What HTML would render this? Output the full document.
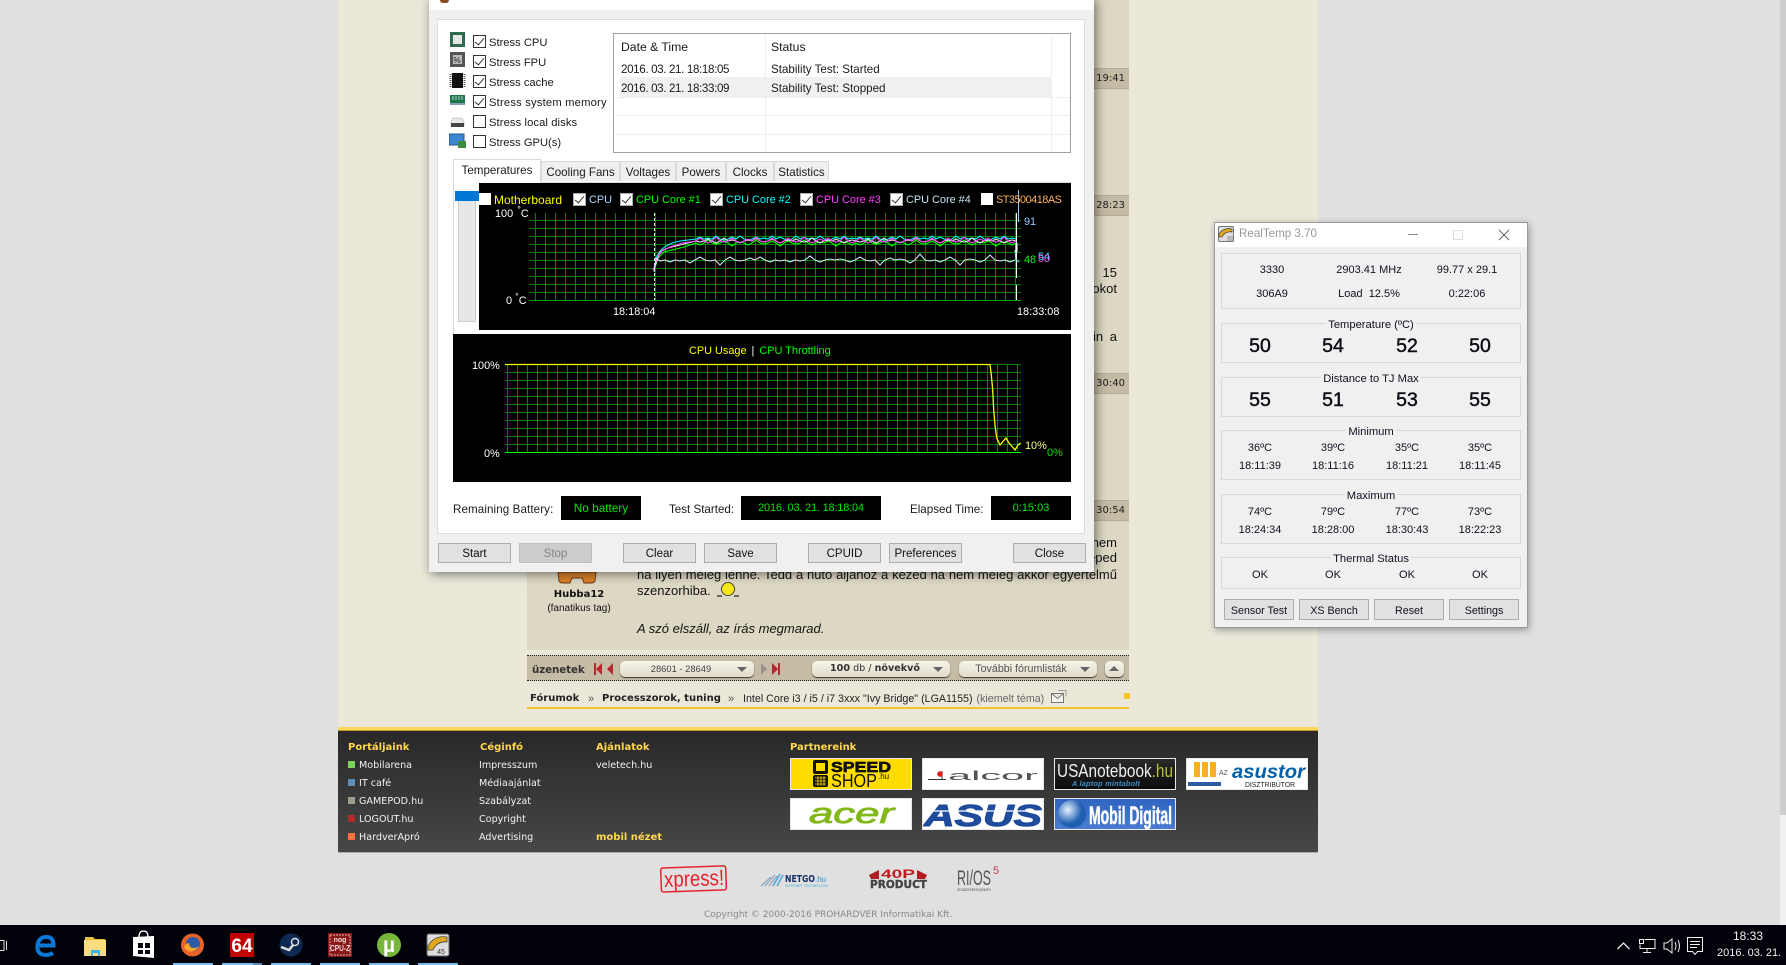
<!DOCTYPE html>
<html lang="hu"><head><meta charset="utf-8"><title>AIDA64 System Stability Test</title>
<style>
html,body{margin:0;padding:0}
body{width:1786px;height:965px;overflow:hidden;background:#e0e0e0;position:relative;font-family:"Liberation Sans",sans-serif;color:#111}
.a{position:absolute}
.t{position:absolute;white-space:nowrap;line-height:16px;height:16px}
.w{font-size:11.6px;color:#1a1a1a;margin-top:1px}
.s{font-size:11.2px;color:#1a1a1a;margin-top:1px}
.d{font-size:11.6px;letter-spacing:-.36px;color:#1a1a1a;margin-top:1px}
.v{font-family:"DejaVu Sans",sans-serif;font-size:9.6px;color:#f2f2f2;margin-top:1px}
.vb{font-family:"DejaVu Sans",sans-serif;font-size:10px;font-weight:bold;color:#ffd84f;margin-top:1px}
.sq{position:absolute;width:7px;height:7px;left:348px}
.time{position:absolute;left:1060px;width:69px;height:21px;background:#c5bca5;border-top:1px solid #b5ac95;border-bottom:1px solid #b5ac95;box-sizing:border-box}
.time span{position:absolute;right:4px;top:2px;font:10px/16px "DejaVu Sans",sans-serif;color:#222}
.p{font-size:13px;color:#111}
.dd{position:absolute;top:661px;height:16px;border-radius:5px;background:linear-gradient(#f7f4ea,#e0dbc9);box-shadow:0 1px 1px #333;text-align:center;line-height:16px;color:#555;font-size:10.7px}
.dd i{position:absolute;right:7px;top:6px;border-left:5px solid transparent;border-right:5px solid transparent;border-top:5px solid #666}
.cb{position:absolute;width:13px;height:13px;box-sizing:border-box;border:1px solid #333;background:#fff}
.cb.on::after{content:"";position:absolute;left:3px;top:0;width:4px;height:8px;border:solid #333;border-width:0 1.3px 1.3px 0;transform:rotate(40deg)}
.lg{font-size:10.9px}
.tab{position:absolute;top:161px;height:20px;box-sizing:border-box;background:#f0f0f0;border:1px solid #d9d9d9;border-bottom:0;text-align:center;line-height:22px;font-size:11.6px;color:#1a1a1a}
.btn{position:absolute;box-sizing:border-box;background:#e1e1e1;border:1px solid #adadad;text-align:center;font-size:11.5px;color:#111;height:20px;line-height:21px;width:73px;top:543px}
.blk{position:absolute;background:#000;color:#00e800;top:496px;height:24px;line-height:24px;text-align:center;font-size:11.2px}
.g{position:absolute;left:1221px;width:300px;box-sizing:border-box;border:1px solid #d9d9d9}
.ti{position:absolute;left:1221px;width:300px;text-align:center;height:14px;line-height:14px;font-size:11.2px;color:#101020;white-space:nowrap;margin-top:1px}
.ti span{background:#f0f0f0;padding:0 2px}
.c{position:absolute;width:80px;text-align:center;white-space:nowrap;font-size:11px;line-height:14px;height:14px;color:#101020;margin-top:1px}
.big{position:absolute;width:60px;text-align:center;font-size:19.5px;font-weight:normal;-webkit-text-stroke:.45px #0c0c14;line-height:22px;height:22px;color:#0c0c14;margin-top:1px}
.rb{position:absolute;top:599px;width:70px;height:21px;box-sizing:border-box;background:#e1e1e1;border:1px solid #adadad;text-align:center;font-size:10.7px;line-height:22px;color:#101020}
.logo{position:absolute;width:122px;height:32px;box-sizing:border-box;border:1px solid #e8e8e8;overflow:hidden}
.logo svg{position:absolute;left:-1px;top:-1px}
.ru{position:absolute;top:963px;height:2px;width:40px;background:#76b9ed}
</style></head><body>

<!-- page column -->
<div class="a" style="left:338px;top:0;width:980px;height:727px;background:#ebe8da"></div>
<div class="a" style="left:527px;top:0;width:602px;height:650px;background:#ddd8c3"></div>
<div class="time" style="top:68px"><span>19:41</span></div>
<div class="time" style="top:195px"><span>28:23</span></div>
<div class="time" style="top:373px"><span>30:40</span></div>
<div class="time" style="top:500px"><span>30:54</span></div>

<div class="t p" style="right:669px;top:265px">15</div>
<div class="t p" style="right:669px;top:281px">pokot</div>
<div class="t p" style="right:669px;top:329px;word-spacing:3px">in a</div>
<div class="t p" style="right:669px;top:535px">nem</div>
<div class="t p" style="right:669px;top:550px">téped</div>
<div class="a p" style="left:637px;top:567px;width:480px;line-height:16px;text-align:justify;text-align-last:justify;white-space:nowrap">na ilyen meleg lenne. Tedd a hűtő aljához a kezed ha nem meleg akkor egyértelmű</div>
<div class="t p" style="left:637px;top:583px">szenzorhiba.</div>
<svg class="a" style="left:714px;top:580px" width="32" height="20"><circle cx="14" cy="9" r="6.5" fill="#f6e61a" stroke="#222" stroke-width=".8"/><path d="M3 16h5M20 16h5" stroke="#222" stroke-width="1.2"/></svg>
<div class="t p" style="left:637px;top:621px;font-style:italic">A szó elszáll, az írás megmarad.</div>

<svg class="a" style="left:555px;top:570px" width="44" height="14"><path d="M3 2h38l-1 9q-1 2-4 2h-7l-2-5h-10l-2 5h-7q-3 0-4-2z" fill="#d9802a" stroke="#6a3b12"/></svg>
<div class="t" style="left:529px;width:100px;text-align:center;top:587px;font:bold 10px/16px 'DejaVu Sans',sans-serif">Hubba12</div>
<div class="t" style="left:529px;width:100px;text-align:center;top:601px;font-size:10px">(fanatikus tag)</div>

<!-- toolbar -->
<div class="a" style="left:527px;top:655px;width:602px;height:26px;box-sizing:border-box;background:#c5bca5;border-top:1px dotted #222;border-bottom:1px dotted #222"></div>
<div class="t" style="left:532px;top:661px;font:bold 10.3px/16px 'DejaVu Sans',sans-serif;color:#333;letter-spacing:-.1px;margin-top:1px">üzenetek</div>
<svg class="a" style="left:592px;top:661px" width="26" height="16"><path d="M2 2h2v12H2zM10 2v12L4 8zM21 2v12l-6-6z" fill="#b5282d"/></svg>
<div class="dd" style="left:620px;width:134px;font-size:9.4px;padding-right:12px;box-sizing:border-box;color:#444">28601 - 28649<i></i></div>
<svg class="a" style="left:758px;top:661px" width="26" height="16"><path d="M3 2v12l6-6z" fill="#a08f8a"/><path d="M14 2v12l6-6zM20 2h2v12h-2z" fill="#b5282d"/></svg>
<div class="dd" style="left:812px;width:138px;padding-right:12px;box-sizing:border-box;font-family:'DejaVu Sans',sans-serif;font-size:9.6px;color:#333"><b>100</b> db / <b>növekvő</b><i></i></div>
<div class="dd" style="left:959px;width:138px;padding-right:14px;box-sizing:border-box;color:#555">További fórumlisták<i></i></div>
<div class="dd" style="left:1105px;width:19px"><i style="right:5px;top:5px;border-top:0;border-bottom:5px solid #666"></i></div>

<!-- breadcrumb -->
<div class="t" style="left:530px;top:691px;font:bold 10px/16px 'DejaVu Sans',sans-serif;color:#222">Fórumok</div>
<div class="t" style="left:588px;top:691px;font-size:11px;color:#555">»</div>
<div class="t" style="left:602px;top:691px;font:bold 10px/16px 'DejaVu Sans',sans-serif;color:#222">Processzorok, tuning</div>
<div class="t" style="left:728px;top:691px;font-size:11px;color:#555">»</div>
<div class="t" style="left:743px;top:691px;font-size:10.7px;color:#222">Intel Core i3 / i5 / i7 3xxx "Ivy Bridge" (LGA1155) <span style="color:#666;margin-left:1px">(kiemelt téma)</span></div>
<svg class="a" style="left:1051px;top:690px" width="16" height="14"><path d="M.5 3.5h12v9H.5zM.5 3.5l6 5 6-5" fill="#f5f5f0" stroke="#777"/><path d="M7 .5h8v6" fill="none" stroke="#999"/></svg>
<div class="a" style="left:1124px;top:693px;width:6px;height:6px;background:#f5c32c"></div>
<div class="a" style="left:527px;top:707px;width:602px;height:2px;background:#f5c32c"></div>

<!-- footer -->
<div class="a" style="left:338px;top:727px;width:980px;height:4px;background:#fdd65a;border-bottom:1px solid #c49a20;box-sizing:border-box"></div>
<div class="a" style="left:338px;top:731px;width:980px;height:122px;background:linear-gradient(#282828,#474747);border-bottom:1px solid #aaa;box-sizing:border-box"></div>
<div class="t vb" style="left:348px;top:739px">Portáljaink</div>
<div class="t vb" style="left:480px;top:739px">Céginfó</div>
<div class="t vb" style="left:596px;top:739px">Ajánlatok</div>
<div class="t vb" style="left:790px;top:739px">Partnereink</div>
<div class="sq" style="top:761px;background:#7ed35e"></div><div class="t v" style="left:359px;top:757px">Mobilarena</div>
<div class="sq" style="top:779px;background:#5f8fb8"></div><div class="t v" style="left:359px;top:775px">IT café</div>
<div class="sq" style="top:797px;background:#a09c90"></div><div class="t v" style="left:359px;top:793px">GAMEPOD.hu</div>
<div class="sq" style="top:815px;background:#b02a2a"></div><div class="t v" style="left:359px;top:811px">LOGOUT.hu</div>
<div class="sq" style="top:833px;background:#ff7040"></div><div class="t v" style="left:359px;top:829px">HardverApró</div>
<div class="t v" style="left:479px;top:757px">Impresszum</div>
<div class="t v" style="left:479px;top:775px">Médiaajánlat</div>
<div class="t v" style="left:479px;top:793px">Szabályzat</div>
<div class="t v" style="left:479px;top:811px">Copyright</div>
<div class="t v" style="left:479px;top:829px">Advertising</div>
<div class="t v" style="left:596px;top:757px">veletech.hu</div>
<div class="t vb" style="left:596px;top:829px">mobil nézet</div>

<!-- partner logos -->
<div class="logo" style="left:790px;top:758px;background:#ffdc00"><svg width="122" height="32"><rect x="23" y="2" width="15" height="14" rx="2" fill="#111"/><rect x="26" y="5" width="9" height="8" fill="#ffdc00"/><rect x="23" y="17" width="15" height="12" rx="2" fill="#111"/><path d="M25 20h11M25 23h11M25 26h11M28 18v10M31 18v10M34 18v10" stroke="#ffdc00" stroke-width=".8"/><text x="41" y="14" font-family="Liberation Sans" font-weight="bold" font-size="15" textLength="60" lengthAdjust="spacingAndGlyphs" fill="#111" stroke="#111" stroke-width=".7">SPEED</text><text x="41" y="29" font-family="Liberation Sans" font-size="18" textLength="46" lengthAdjust="spacingAndGlyphs" fill="#111">SHOP</text><text x="88" y="21" font-family="Liberation Sans" font-size="8" fill="#111">.hu</text></svg></div>
<div class="logo" style="left:922px;top:758px;background:#fff"><svg width="122" height="32"><path d="M6 21.500h18M20 13v9" stroke="#333"/><circle cx="18" cy="16" r="2.800" fill="#e02020"/><text x="26" y="22" font-family="Liberation Sans" font-size="13" textLength="90" lengthAdjust="spacingAndGlyphs" fill="#555">alcor</text></svg></div>
<div class="logo" style="left:1054px;top:758px;background:linear-gradient(#2a2a2a,#0c0c0c)"><svg width="122" height="32"><text x="3" y="19" font-family="Liberation Sans" font-size="18" textLength="116" lengthAdjust="spacingAndGlyphs" fill="#eee">USAnotebook<tspan fill="#b8c040">.hu</tspan></text><text x="18" y="28" font-family="Liberation Sans" font-size="7.500" font-weight="bold" font-style="italic" textLength="68" fill="#3d8fc6">A laptop mintabolt</text></svg></div>
<div class="logo" style="left:1186px;top:758px;background:#fff"><svg width="122" height="32"><rect x="8" y="4" width="6" height="15" fill="#fbb21a"/><rect x="16" y="4" width="6" height="15" fill="#fbb21a"/><rect x="24" y="4" width="6" height="15" fill="#fbb21a"/><text x="33" y="17" font-family="Liberation Sans" font-size="7" fill="#555">AZ</text><text x="46" y="20" font-family="Liberation Sans" font-weight="bold" font-style="italic" font-size="19" textLength="73" lengthAdjust="spacingAndGlyphs" fill="#0060a8">asustor</text><text x="59" y="29" font-family="Liberation Sans" font-size="7" textLength="50" lengthAdjust="spacingAndGlyphs" fill="#222">DISZTRIBÚTOR</text><rect x="2" y="24" width="33" height="4" fill="#2a5ea0"/></svg></div>
<div class="logo" style="left:790px;top:798px;background:#fff"><svg width="122" height="32"><text x="19" y="25" font-family="Liberation Sans" font-style="italic" font-size="29" textLength="85" lengthAdjust="spacingAndGlyphs" fill="#83b81a" stroke="#83b81a" stroke-width=".8">acer</text></svg></div>
<div class="logo" style="left:922px;top:798px;background:#fff"><svg width="122" height="32"><text x="2" y="28" font-family="Liberation Sans" font-weight="bold" font-style="italic" font-size="31" textLength="118" lengthAdjust="spacingAndGlyphs" fill="#1f4b9c" stroke="#1f4b9c" stroke-width="1">ASUS</text><path d="M0 13h122" stroke="#fff" stroke-width="1.200"/></svg></div>
<div class="logo" style="left:1054px;top:798px;background:linear-gradient(#2f64c0,#4a7bd0)"><svg width="122" height="32"><defs><radialGradient id="gl" cx=".35" cy=".35"><stop offset="0" stop-color="#e8f2ff"/><stop offset="1" stop-color="#1f5fb0"/></radialGradient></defs><circle cx="18" cy="16" r="14" fill="url(#gl)"/><text x="35" y="26" font-family="Liberation Sans" font-weight="bold" font-size="25" textLength="83" lengthAdjust="spacingAndGlyphs" fill="#fff" stroke="#fff" stroke-width=".5">Mobil Digital</text></svg></div>

<!-- bottom sponsors -->
<svg class="a" style="left:655px;top:860px" width="350" height="36">
<g transform="rotate(-2 38 18)"><rect x="6" y="7" width="65" height="24" rx="2" fill="none" stroke="#e8222c" stroke-width="1.500"/><text x="9" y="26" font-family="Liberation Sans" font-size="22" textLength="60" lengthAdjust="spacingAndGlyphs" fill="#e8222c">xpress!</text></g>
<path d="M106 26l10-9M110 26l10-11M114 26l8-10" stroke="#8aa2b8" stroke-width="1.200"/><path d="M118 26l7-12M122 26l6-11" stroke="#48a8d8" stroke-width="1.500"/>
<text x="130" y="22" font-family="DejaVu Sans" font-weight="bold" font-size="10" textLength="30" lengthAdjust="spacingAndGlyphs" fill="#15306a">NETGO</text><text x="160" y="22" font-family="Liberation Sans" font-size="8" fill="#2a8ac8">.hu</text><text x="130" y="27" font-family="Liberation Sans" font-size="3.500" textLength="44" fill="#3ba8dc">INTERNET TECHNOLOGY</text>
<path d="M214 15l10-5v9h-8zM272 15l-10-5v9h8z" fill="#b01c20"/>
<text x="226" y="18" font-family="Liberation Sans" font-weight="bold" font-size="12" textLength="34" lengthAdjust="spacingAndGlyphs" fill="#c01c20">40P</text>
<text x="215" y="28" font-family="DejaVu Sans" font-weight="bold" font-size="11" textLength="57" lengthAdjust="spacingAndGlyphs" fill="#444" stroke="#444" stroke-width=".4">PRODUCT</text>
<text x="302" y="25" font-family="Liberation Sans" font-size="21" textLength="34" lengthAdjust="spacingAndGlyphs" fill="#555">RI/OS</text><text x="338" y="14" font-family="Liberation Sans" font-size="11" fill="#c04050">5</text><text x="302" y="31" font-family="Liberation Sans" font-size="3.500" textLength="34" fill="#555">STUDIO FOROS LENGTH</text>
</svg>
<div class="t" style="left:704px;top:907px;font:9px/16px 'DejaVu Sans',sans-serif;color:#888">Copyright © 2000-2016 PROHARDVER Informatikai Kft.</div>

<!-- scrollbar -->
<div class="a" style="left:1780px;top:0;width:6px;height:815px;background:#cdcdcd"></div>
<div class="a" style="left:1780px;top:815px;width:6px;height:110px;background:#f0f0f0"></div>

<!-- AIDA window -->
<div class="a" style="left:429px;top:-2px;width:665px;height:574px;background:#f0f0f0;box-shadow:2px 2px 10px rgba(0,0,0,.5)"></div>
<div class="a" style="left:429px;top:0;width:665px;height:10px;background:#fff"></div>
<div class="a" style="left:440px;top:0;width:9px;height:3px;background:#8a4a20;border-radius:0 0 4px 4px"></div>
<div class="a" style="left:437px;top:19px;width:648px;height:515px;box-sizing:border-box;background:#fff;border:1px solid #dcdcdc"></div>

<!-- stress icons -->
<svg class="a" style="left:449px;top:31px" width="18" height="120">
<rect x="1" y="1" width="15" height="15" fill="#2f6b4f"/><rect x="4" y="4" width="9" height="9" fill="#e6e6e6"/>
<rect x="1" y="21" width="15" height="15" fill="#555"/><rect x="4" y="24" width="9" height="9" fill="#bbb"/><text x="4.500" y="32" font-size="8" font-family="Liberation Sans" fill="#222">%</text>
<rect x="3" y="42" width="11" height="15" fill="#111"/><path d="M1.500 43v13M15.500 43v13" stroke="#555" stroke-width="2" stroke-dasharray="1 1"/>
<rect x="1" y="64" width="15" height="8" fill="#1c7a48"/><path d="M3 66h11M3 68h11" stroke="#bcd" stroke-dasharray="2 1"/><rect x="1" y="72" width="15" height="2" fill="#89b"/>
<path d="M2 90l2-3h9l2 3v5H2z" fill="#e8e8e8" stroke="#aaa" stroke-width=".5"/><rect x="2" y="92" width="13" height="4" fill="#444"/>
<rect x="0" y="103" width="15" height="11" fill="#3a88d0" stroke="#27568a"/><rect x="9" y="110" width="8" height="7" fill="#3c8a3c"/>
</svg>
<div class="cb on" style="left:473px;top:35px"></div><div class="t s" style="left:489px;top:34px">Stress CPU</div>
<div class="cb on" style="left:473px;top:55px"></div><div class="t s" style="left:489px;top:54px">Stress FPU</div>
<div class="cb on" style="left:473px;top:75px"></div><div class="t s" style="left:489px;top:74px">Stress cache</div>
<div class="cb on" style="left:473px;top:95px"></div><div class="t s" style="left:489px;top:94px;letter-spacing:.2px">Stress system memory</div>
<div class="cb" style="left:473px;top:115px"></div><div class="t s" style="left:489px;top:114px;letter-spacing:.1px">Stress local disks</div>
<div class="cb" style="left:473px;top:135px"></div><div class="t s" style="left:489px;top:134px">Stress GPU(s)</div>

<!-- log table -->
<div class="a" style="left:613px;top:33px;width:458px;height:120px;box-sizing:border-box;background:#fff;border:1px solid #a0a0a0"></div>
<div class="a" style="left:620px;top:77px;width:431px;height:20px;background:#f0f0f0"></div>
<div class="a" style="left:615px;top:97px;width:455px;height:1px;background:#eee"></div>
<div class="a" style="left:615px;top:115px;width:455px;height:1px;background:#eee"></div>
<div class="a" style="left:615px;top:134px;width:455px;height:1px;background:#eee"></div>
<div class="a" style="left:765px;top:35px;width:1px;height:116px;background:#eee"></div>
<div class="a" style="left:1051px;top:35px;width:1px;height:116px;background:#eee"></div>
<div class="t" style="left:621px;top:39px;font-size:12.2px;color:#1a1a1a">Date &amp; Time</div><div class="t" style="left:771px;top:39px;font-size:12.2px;color:#1a1a1a">Status</div>
<div class="t d" style="left:621px;top:61px">2016. 03. 21. 18:18:05</div><div class="t w" style="left:771px;top:61px">Stability Test: Started</div>
<div class="t d" style="left:621px;top:80px">2016. 03. 21. 18:33:09</div><div class="t w" style="left:771px;top:80px">Stability Test: Stopped</div>

<!-- tabs -->
<div class="a" style="left:453px;top:182px;width:618px;height:1px;background:#d9d9d9"></div>
<div class="a" style="left:453px;top:182px;width:1px;height:152px;background:#d9d9d9"></div>
<div class="tab" style="left:453px;top:159px;height:24px;width:88px;background:#fff;line-height:21px">Temperatures</div>
<div class="tab" style="left:541px;width:79px">Cooling Fans</div>
<div class="tab" style="left:620px;width:56px">Voltages</div>
<div class="tab" style="left:676px;width:50px">Powers</div>
<div class="tab" style="left:726px;width:48px">Clocks</div>
<div class="tab" style="left:774px;width:55px">Statistics</div>

<!-- temperature graph -->
<div class="a" style="left:458px;top:192px;width:18px;height:130px;box-sizing:border-box;background:#e6e8e8;border:1px solid #ccc"></div>
<div class="a" style="left:455px;top:191px;width:24px;height:10px;background:#0078d7"></div>
<div class="a" style="left:479px;top:183px;width:592px;height:147px;background:#000"></div>
<div class="a" style="left:453px;top:334px;width:618px;height:148px;background:#000"></div>

<svg class="a" style="left:0;top:0" width="1786" height="965">
<defs>
<pattern id="tv" patternUnits="userSpaceOnUse" x="535" y="0" width="10" height="10"><rect width="1" height="10" fill="#008400"/></pattern>
<pattern id="th" patternUnits="userSpaceOnUse" x="0" y="220" width="10" height="8"><rect width="10" height="1" fill="#008400"/></pattern>
<pattern id="cv" patternUnits="userSpaceOnUse" x="507" y="0" width="10" height="10"><rect width="1" height="10" fill="#008400"/></pattern>
<pattern id="ch" patternUnits="userSpaceOnUse" x="0" y="364" width="10" height="8"><rect width="10" height="1" fill="#008400"/></pattern>
<path id="sg" stroke="#00ff00" d="M696 243l4 2 4-2 4-3 4 3 4 1 4-1 4-2 4 2 4 3 4-3 4-1 4 1 4 2 4-2 4-3 4 3 4 1 4-1 4-2 4 2 4 3 4-3 4-2 4 2 4 1 4-1 4-3 4 3 4 2 4-2 4-1 4 1 4-2 4 2 4 3 4-3 4-1 4 1 4 2 4-2"/>
<path id="sc" stroke="#00ffff" d="M696 239l4-2 4 2 4-1 4 1 4-3 4 3 4 1 4-1 4-2 4 2 4-3 4 3 4 1 4-1 4-2 4 2 4-1 4 1 4-3 4 3 4-2 4 2 4 1 4-1 4-3 4 3 4-2 4 2 4-1 4 1 4-3 4 3 4 1 4-1 4-2 4 2 4-3 4 3 4-1 4 1"/>
<path id="sw" stroke="#e8e8e8" d="M696 241l4 1 4-1 4-2 4 2 4 2 4-2 4-3 4 3 4-1 4 1 4 2 4-2 4-1 4 1 4-3 4 3 4 1 4-1 4-2 4 2 4 2 4-2 4-1 4 1 4-2 4 2 4 1 4-1 4-3 4 3 4 2 4-2 4-1 4 1 4-2 4 2 4 2 4-2 4-1 4 1"/>
<path id="sm" stroke="#ff40ff" d="M696 241l4-3 4 3 4 2 4-2 4-4 4 4 4 1 4-1 4-3 4 3 4 2 4-2 4-2 4 2 4-4 4 4 4 1 4-1 4-3 4 3 4 2 4-2 4-3 4 3 4 1 4-1 4-4 4 4 4 2 4-2 4-2 4 2 4-3 4 3 4 1 4-1 4-4 4 4 4 2 4-2"/>
</defs>
<rect x="529" y="213" width="492" height="88" fill="url(#tv)"/>
<rect x="529" y="220" width="492" height="81" fill="url(#th)"/>
<rect x="529" y="300" width="492" height="1" fill="#00a000"/>
<path d="M654.500 213V300" stroke="#fff" stroke-dasharray="3 2"/>
<path d="M1016.500 213V278M1016.500 285V300" stroke="#fff"/>
<path d="M1016.500 243V252" stroke="#fff" stroke-width="2"/>
<path d="M1018.500 190V222" stroke="#a0c8ff"/><path d="M1015 250l1 10 3 2" stroke="#a0f0ff" fill="none"/>
<g fill="none" stroke-width="1.100">
<path stroke="#00ff00" d="M655 268L658 258 664 252 672 250 684 247 696 243"/>
<use href="#sg"/><use href="#sg" x="160"/>
<path stroke="#00ffff" d="M655 266L657 256 661 250 666 246 672 243 680 241 696 239"/>
<use href="#sc"/><use href="#sc" x="160"/>
<path stroke="#e8e8e8" d="M655 266L660 252 668 248 680 245 696 241"/>
<use href="#sw"/><use href="#sw" x="160"/>
<path stroke="#ff40ff" d="M653 270L658 256 663 250 670 247 682 243 696 241"/>
<use href="#sm"/><use href="#sm" x="160"/>
<path stroke="#cfe4ff" d="M654 272L656 258 660 261l5-1 5 2 5-2 5 1 5-1 5 3 5-3 5-3 5 3 5 1 5-1 5 5 5-5 5-3 5 3 5 1 5-1 5-2 5 2 5-3 5 3 5 2 5-2 5 1 5-1 5 2 5-2 5 1 5-1 5-4 5 4 5 2 5-2 5-1 5 1 5-1 5 1 5 2 5-2 5-3 5 3 5 1 5-1 5 5 5-5 5-2 5 2 5-1 5 1 5 3 5-3 5-6 5 6 5 1 5-1 5 2 5-2 5-3 5 3 5 5 5-5 5-1 5 1 5 2 5-2 5-5 5 5 5 1 5-1 5 2 5-2"/>
</g>
<rect x="505" y="364" width="516" height="88" fill="url(#cv)"/>
<rect x="505" y="364" width="516" height="88" fill="url(#ch)"/>
<rect x="505" y="452" width="516" height="1" fill="#00ff00"/>
<path d="M505 364.500H990L991.300 375 992.700 390 993.700 410 995 425 996.700 438 1000 445 1006 438 1009 443 1011.700 446 1015 450 1018 445 1020.700 443" fill="none" stroke="#ffff00" stroke-width="1.300"/>
</svg>

<!-- temp graph text -->
<div class="a" style="left:479px;top:193px;width:12px;height:12px;background:#fff"></div>
<div class="t lg" style="left:494px;top:192px;color:#ffff00;font-size:12px">Motherboard</div>
<div class="cb on" style="left:573px;top:193px;border-color:#aaa"></div><div class="t lg" style="left:589px;top:192px;color:#b0d8ff">CPU</div>
<div class="cb on" style="left:620px;top:193px;border-color:#aaa"></div><div class="t lg" style="left:636px;top:192px;color:#00ff00">CPU Core #1</div>
<div class="cb on" style="left:710px;top:193px;border-color:#aaa"></div><div class="t lg" style="left:726px;top:192px;color:#00ffff">CPU Core #2</div>
<div class="cb on" style="left:800px;top:193px;border-color:#aaa"></div><div class="t lg" style="left:816px;top:192px;color:#ff40ff">CPU Core #3</div>
<div class="cb on" style="left:890px;top:193px;border-color:#aaa"></div><div class="t lg" style="left:906px;top:192px;color:#c8e4f0">CPU Core #4</div>
<div class="a" style="left:981px;top:193px;width:12px;height:12px;background:#fff"></div>
<div class="t lg" style="left:996px;top:192px;color:#ffb060;letter-spacing:-.5px">ST3500418AS</div>
<div class="t lg" style="left:495px;top:206px;color:#fff;word-spacing:1px">100 <sup style="font-size:9px;line-height:0">°</sup>C</div>
<div class="t lg" style="left:506px;top:293px;color:#fff">0 <sup style="font-size:9px;line-height:0">°</sup>C</div>
<div class="t lg" style="left:613px;top:304px;color:#fff">18:18:04</div>
<div class="t lg" style="left:1017px;top:304px;color:#fff">18:33:08</div>
<div class="t lg" style="left:1024px;top:214px;color:#a0c8ff">91</div>
<div class="t lg" style="left:1024px;top:252px;color:#00ff00">48</div>
<div class="t lg" style="left:1038px;top:249px;color:#00e0ff">54</div>
<div class="t lg" style="left:1038px;top:251px;color:#ff60ff">50</div>

<!-- cpu graph text -->
<div class="t lg" style="left:689px;top:343px;color:#ffff00">CPU Usage <span style="color:#fff;padding:0 2px">|</span> <span style="color:#00ff00">CPU Throttling</span></div>
<div class="t lg" style="left:472px;top:358px;color:#fff">100%</div>
<div class="t lg" style="left:484px;top:446px;color:#fff">0%</div>
<div class="t lg" style="left:1025px;top:438px;color:#ffff80">10%</div>
<div class="t lg" style="left:1047px;top:445px;color:#00e000">0%</div>

<!-- status row -->
<div class="t w" style="left:453px;top:501px;letter-spacing:.1px">Remaining Battery:</div>
<div class="blk" style="left:561px;width:80px;font-size:11.8px">No battery</div>
<div class="t w" style="left:669px;top:501px">Test Started:</div>
<div class="blk" style="left:741px;width:140px;font-size:11px;letter-spacing:-.2px">2016. 03. 21. 18:18:04</div>
<div class="t w" style="left:910px;top:501px">Elapsed Time:</div>
<div class="blk" style="left:991px;width:80px;font-size:11px">0:15:03</div>

<div class="btn" style="left:438px">Start</div>
<div class="btn" style="left:519px;background:#ccc;border-color:#bfbfbf;color:#858585">Stop</div>
<div class="btn" style="left:623px">Clear</div>
<div class="btn" style="left:704px">Save</div>
<div class="btn" style="left:808px">CPUID</div>
<div class="btn" style="left:889px">Preferences</div>
<div class="btn" style="left:1013px">Close</div>

<!-- RealTemp window -->
<div class="a" style="left:1214px;top:222px;width:314px;height:406px;box-sizing:border-box;background:#f0f0f0;border:1px solid #9a9a9a;box-shadow:1px 2px 7px rgba(0,0,0,.35)"></div>
<div class="a" style="left:1215px;top:223px;width:312px;height:24px;background:#fff"></div>
<svg class="a" style="left:1218px;top:226px" width="17" height="16"><rect x=".5" y=".5" width="15" height="15" rx="1" fill="#ddd" stroke="#777"/><path d="M1 8q5-7 13-5v3q-7-1-10 5H1z" fill="#e0a820" stroke="#222" stroke-width=".6"/><rect x="9" y="10" width="6" height="5" fill="#bbb"/></svg>
<div class="t" style="left:1239px;top:226px;font-size:11.6px;color:#999">RealTemp 3.70</div>
<div class="a" style="left:1408px;top:234px;width:10px;height:1px;background:#888"></div>
<div class="a" style="left:1453px;top:230px;width:10px;height:10px;box-sizing:border-box;border:1px solid #ddd"></div>
<svg class="a" style="left:1498px;top:229px" width="12" height="12"><path d="M1 1l10 10M11 1L1 11" stroke="#666"/></svg>

<div class="g" style="top:253px;height:56px"></div>
<div class="g" style="top:323px;height:40px"></div>
<div class="g" style="top:377px;height:40px"></div>
<div class="g" style="top:430px;height:50px"></div>
<div class="g" style="top:494px;height:50px"></div>
<div class="g" style="top:557px;height:32px"></div>

<div class="c" style="left:1232px;top:262px">3330</div>
<div class="c" style="left:1329px;top:262px">2903.41 MHz</div>
<div class="c" style="left:1427px;top:262px">99.77 x 29.1</div>
<div class="c" style="left:1232px;top:286px">306A9</div>
<div class="c" style="left:1329px;top:286px">Load&nbsp; 12.5%</div>
<div class="c" style="left:1427px;top:286px">0:22:06</div>

<div class="ti" style="top:317px"><span>Temperature (ºC)</span></div>
<div class="big" style="left:1230px;top:334px">50</div><div class="big" style="left:1303px;top:334px">54</div><div class="big" style="left:1377px;top:334px">52</div><div class="big" style="left:1450px;top:334px">50</div>
<div class="ti" style="top:371px"><span>Distance to TJ Max</span></div>
<div class="big" style="left:1230px;top:388px">55</div><div class="big" style="left:1303px;top:388px">51</div><div class="big" style="left:1377px;top:388px">53</div><div class="big" style="left:1450px;top:388px">55</div>

<div class="ti" style="top:424px"><span>Minimum</span></div>
<div class="c" style="left:1220px;top:440px">36ºC</div><div class="c" style="left:1293px;top:440px">39ºC</div><div class="c" style="left:1367px;top:440px">35ºC</div><div class="c" style="left:1440px;top:440px">35ºC</div>
<div class="c" style="left:1220px;top:458px">18:11:39</div><div class="c" style="left:1293px;top:458px">18:11:16</div><div class="c" style="left:1367px;top:458px">18:11:21</div><div class="c" style="left:1440px;top:458px">18:11:45</div>

<div class="ti" style="top:488px"><span>Maximum</span></div>
<div class="c" style="left:1220px;top:504px">74ºC</div><div class="c" style="left:1293px;top:504px">79ºC</div><div class="c" style="left:1367px;top:504px">77ºC</div><div class="c" style="left:1440px;top:504px">73ºC</div>
<div class="c" style="left:1220px;top:522px">18:24:34</div><div class="c" style="left:1293px;top:522px">18:28:00</div><div class="c" style="left:1367px;top:522px">18:30:43</div><div class="c" style="left:1440px;top:522px">18:22:23</div>

<div class="ti" style="top:551px"><span>Thermal Status</span></div>
<div class="c" style="left:1220px;top:567px">OK</div><div class="c" style="left:1293px;top:567px">OK</div><div class="c" style="left:1367px;top:567px">OK</div><div class="c" style="left:1440px;top:567px">OK</div>

<div class="rb" style="left:1224px">Sensor Test</div>
<div class="rb" style="left:1299px">XS Bench</div>
<div class="rb" style="left:1374px">Reset</div>
<div class="rb" style="left:1449px">Settings</div>

<!-- taskbar -->
<div class="a" style="left:0;top:925px;width:1786px;height:40px;background:#02030a"></div>
<svg class="a" style="left:0;top:925px" width="470" height="40">
<path d="M0 15.500h4v10H0M6.500 16v9" fill="none" stroke="#ddd"/>
<!-- edge -->
<path d="M39.500 20.500h14q0-8.500-7-8.500-8 0-9 8.500-1 9 8 9.500 4 0 7.500-2" fill="none" stroke="#0a78d7" stroke-width="4"/>
<!-- folder -->
<path d="M85 12h8l2 2h10v5H85z" fill="#e8c040"/><rect x="84" y="15" width="22" height="16" fill="#fbdc7e"/><rect x="91" y="25" width="9" height="6" fill="#39b4e8"/><rect x="93" y="28" width="5" height="3" fill="#fbdc7e"/>
<!-- store -->
<path d="M133 12l21-1v22l-21-2z" fill="#fff"/><path d="M139 12q0-6 4.500-6t4.500 6" fill="none" stroke="#fff" stroke-width="1.300"/><path d="M138 18h5v5h-5zM145 18h5v5h-5zM138 25h5v4h-5zM145 25h5v4h-5z" fill="#02030a"/>
<!-- firefox -->
<circle cx="192.500" cy="20" r="11.500" fill="#e8622a"/><circle cx="193" cy="19" r="7" fill="#2a5aa8"/><path d="M184 22q4 6 9 4 5-1 6-6-1 3-5 3-5 0-5-5-3 0-5 4z" fill="#f6a526"/>
<!-- 64 -->
<rect x="230" y="8" width="24" height="24" fill="#c00000"/><text x="242" y="27" text-anchor="middle" font-family="Liberation Sans" font-weight="bold" font-size="19" fill="#fff">64</text>
<!-- steam -->
<circle cx="291" cy="20" r="11.500" fill="#0f2a52"/><circle cx="295" cy="17" r="3.500" fill="none" stroke="#ddd" stroke-width="1.500"/><path d="M281 22l8 3 4-5" stroke="#ddd" stroke-width="2.500" fill="none"/>
<!-- cpu-z -->
<rect x="328" y="8" width="24" height="24" fill="#8a1818"/><rect x="330" y="10" width="20" height="20" fill="none" stroke="#d9b0b0" stroke-dasharray="2 1"/><text x="340" y="17" text-anchor="middle" font-family="Liberation Sans" font-weight="bold" font-size="7" fill="#f3dddd">nog</text><text x="340" y="26" text-anchor="middle" font-family="Liberation Sans" font-weight="bold" font-size="8" textLength="20" lengthAdjust="spacingAndGlyphs" fill="#f3dddd">CPU-Z</text>
<!-- utorrent -->
<circle cx="389" cy="20" r="12" fill="#78b63c"/><text x="389" y="27" text-anchor="middle" font-family="Liberation Sans" font-weight="bold" font-size="21" fill="#fff">µ</text>
<!-- realtemp -->
<rect x="427" y="9" width="22" height="22" rx="2" fill="#ddd" stroke="#666"/><path d="M428 21q6-11 19-9v5q-10-1-14 8h-5z" fill="#e0a820" stroke="#333" stroke-width=".7"/><text x="441" y="29" text-anchor="middle" font-family="Liberation Sans" font-size="7" fill="#333">45</text>
</svg>
<div class="ru" style="left:173px"></div>
<div class="ru" style="left:222px"></div><div class="a" style="left:253px;top:963px;width:9px;height:2px;background:#5a8db8"></div>
<div class="ru" style="left:271px"></div>
<div class="ru" style="left:320px"></div>
<div class="ru" style="left:369px"></div>
<div class="ru" style="left:418px"></div>

<svg class="a" style="left:1610px;top:925px" width="100" height="40" fill="none" stroke="#eee">
<path d="M7.500 24l6-6 6 6" stroke-width="1.300"/>
<path d="M34.500 14.500h10.500v9h-15v-4M37 23.500v3.500M33 27.500h8M29.500 14.500h4v4h-4z"/>
<path d="M54 18h3l5-4v14l-5-4h-3zM65 17q2 4 0 8M68 15q3 6 0 12"/>
<path d="M77.500 12.500h15v14h-5l-2.500 3-2.500-3h-5zM80 16.500h10M80 19.500h10M80 22.500h7"/>
</svg>
<div class="t" style="left:1690px;width:116px;text-align:center;top:928px;font-size:12px;color:#eee">18:33</div>
<div class="t" style="left:1717px;top:945px;font-size:11px;color:#eee">2016. 03. 21.</div>
</body></html>
